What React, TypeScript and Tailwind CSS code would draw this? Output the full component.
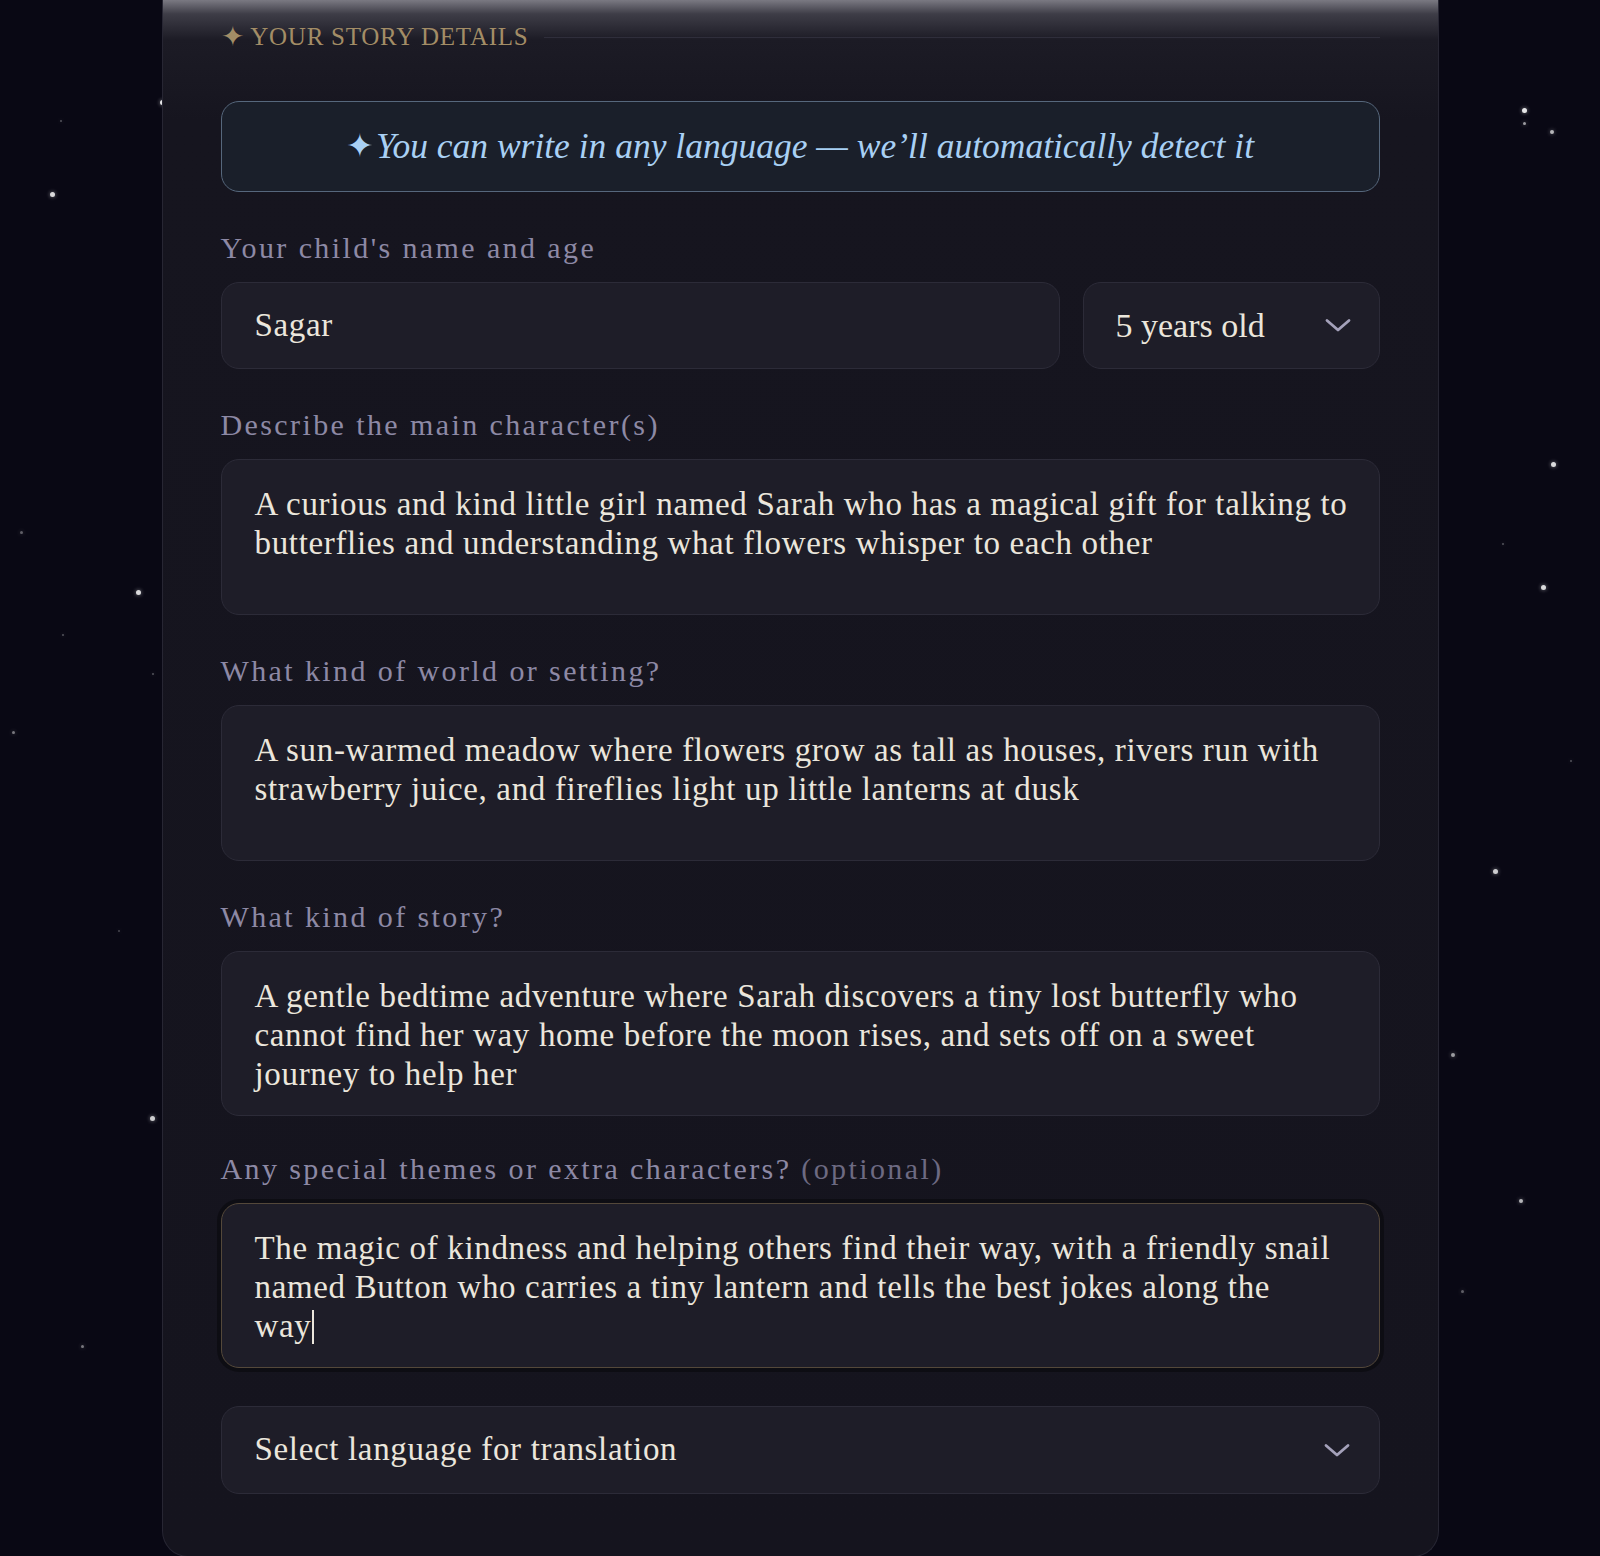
import React from 'react';

const stars = [
  { x: 160, y: 100, s: 5, o: 0.9 },
  { x: 50, y: 192, s: 5, o: 0.85 },
  { x: 60, y: 120, s: 2, o: 0.3 },
  { x: 20, y: 531, s: 3, o: 0.35 },
  { x: 136, y: 590, s: 5, o: 0.85 },
  { x: 62, y: 634, s: 2, o: 0.3 },
  { x: 152, y: 673, s: 2, o: 0.3 },
  { x: 12, y: 731, s: 3, o: 0.45 },
  { x: 150, y: 1116, s: 5, o: 0.8 },
  { x: 81, y: 1345, s: 3, o: 0.45 },
  { x: 118, y: 930, s: 2, o: 0.25 },
  { x: 1522, y: 108, s: 5, o: 0.9 },
  { x: 1523, y: 122, s: 3, o: 0.6 },
  { x: 1550, y: 130, s: 4, o: 0.7 },
  { x: 1551, y: 462, s: 5, o: 0.85 },
  { x: 1502, y: 543, s: 2, o: 0.3 },
  { x: 1541, y: 585, s: 5, o: 0.85 },
  { x: 1493, y: 869, s: 5, o: 0.8 },
  { x: 1451, y: 1053, s: 4, o: 0.6 },
  { x: 1519, y: 1199, s: 4, o: 0.7 },
  { x: 1461, y: 1290, s: 3, o: 0.35 },
  { x: 1570, y: 760, s: 2, o: 0.3 },
];

function Chevron() {
  return (
    <svg width="26" height="15" viewBox="0 0 26 15" fill="none" className="shrink-0">
      <path d="M2 2.5 L13 12 L24 2.5" stroke="#a4a1ba" strokeWidth="2.8" strokeLinecap="round" strokeLinejoin="round" />
    </svg>
  );
}

function Label({ children }: { children: React.ReactNode }) {
  return (
    <div className="mb-[16px] h-[36px] text-[30px] leading-[36px] tracking-[0.08em] text-[#8d89a5]">
      {children}
    </div>
  );
}

function TextBox({ lines, focused, caret }: { lines: string[]; focused?: boolean; caret?: boolean }) {
  return (
    <div
      className={
        focused
          ? 'min-h-[156px] rounded-[18px] border-[1.5px] border-[#54483a] bg-[#1e1d28] px-[33px] pt-[25px] pb-[21px] shadow-[0_0_0_4px_rgba(0,0,0,0.35)]'
          : 'min-h-[156px] rounded-[18px] border border-[#2c2b38] bg-[#1e1d28] px-[33px] pt-[25px] pb-[21px]'
      }
    >
      {lines.map((line, i) => (
        <div key={i} className="whitespace-nowrap text-[33px] leading-[39px] tracking-[0.02em] text-[#ebe6dc]">
          {line}
          {caret && i === lines.length - 1 && (
            <span className="ml-[1px] inline-block h-[34px] w-[2px] align-[-7px] bg-[#ebe6dc]" />
          )}
        </div>
      ))}
    </div>
  );
}

export default function App() {
  return (
    <div className="relative h-[1556px] overflow-hidden bg-[#090814] font-['Liberation_Serif',serif]">
      {stars.map((st, i) => (
        <span
          key={i}
          className="absolute rounded-full bg-white shadow-[0_0_4px_rgba(255,255,255,0.6)]"
          style={{ left: st.x, top: st.y, width: st.s, height: st.s, opacity: st.o }}
        />
      ))}

      <div className="relative mx-auto min-h-[1556px] w-[1277px] rounded-b-[26px] border-x border-b border-[#272633] bg-[linear-gradient(to_bottom,#7a7982_0px,#3e3d47_14px,#1c1b25_40px,#16151f_120px,#15141e_100%)] px-[58px] pt-[22px] pb-[62px]">
        <div className="flex h-[30px] items-center gap-[16px]">
          <div className="flex items-center gap-[6px] text-[25px] uppercase tracking-[0.03em] text-[#a38d66]">
            <span className="text-[28px] leading-none">✦</span>
            <span>Your Story Details</span>
          </div>
          <div className="h-px flex-1 bg-[#2f2e3b]" />
        </div>

        <div className="mt-[49px] flex h-[91px] items-center justify-center rounded-[18px] border-[1.5px] border-[#56677c] bg-[#1a1f2a] text-[35.5px] italic text-[#a9d0f4]">
          <span className="mr-[2px] not-italic text-[33px]">✦</span>
          You can write in any language — we’ll automatically detect it
        </div>

        <div className="mt-[38px] flex flex-col gap-[38px]">
          <div>
            <Label>Your child's name and age</Label>
            <div className="flex gap-[23px]">
              <div className="flex h-[87px] flex-1 items-center rounded-[18px] border border-[#2c2b38] bg-[#1e1d28] px-[33px] text-[33px] tracking-[0.02em] text-[#ebe6dc]">
                Sagar
              </div>
              <div className="flex h-[87px] w-[297px] items-center justify-between rounded-[18px] border border-[#2c2b38] bg-[#1e1d28] pl-[32px] pr-[28px] text-[34px] text-[#ebe6dc]">
                <span>5 years old</span>
                <Chevron />
              </div>
            </div>
          </div>

          <div>
            <Label>Describe the main character(s)</Label>
            <TextBox
              lines={[
                'A curious and kind little girl named Sarah who has a magical gift for talking to',
                'butterflies and understanding what flowers whisper to each other',
              ]}
            />
          </div>

          <div>
            <Label>What kind of world or setting?</Label>
            <TextBox
              lines={[
                'A sun-warmed meadow where flowers grow as tall as houses, rivers run with',
                'strawberry juice, and fireflies light up little lanterns at dusk',
              ]}
            />
          </div>

          <div>
            <Label>What kind of story?</Label>
            <TextBox
              lines={[
                'A gentle bedtime adventure where Sarah discovers a tiny lost butterfly who',
                'cannot find her way home before the moon rises, and sets off on a sweet',
                'journey to help her',
              ]}
            />
          </div>

          <div className="-mt-[3px]">
            <Label>
              Any special themes or extra characters? <span className="text-[#6d6a82]">(optional)</span>
            </Label>
            <TextBox
              focused
              caret
              lines={[
                'The magic of kindness and helping others find their way, with a friendly snail',
                'named Button who carries a tiny lantern and tells the best jokes along the',
                'way',
              ]}
            />
          </div>

          <div className="flex h-[88px] items-center justify-between rounded-[18px] border border-[#2c2b38] bg-[#1e1d28] pl-[33px] pr-[29px] text-[33px] tracking-[0.02em] text-[#ebe6dc]">
            <span>Select language for translation</span>
            <Chevron />
          </div>
        </div>
      </div>
    </div>
  );
}
